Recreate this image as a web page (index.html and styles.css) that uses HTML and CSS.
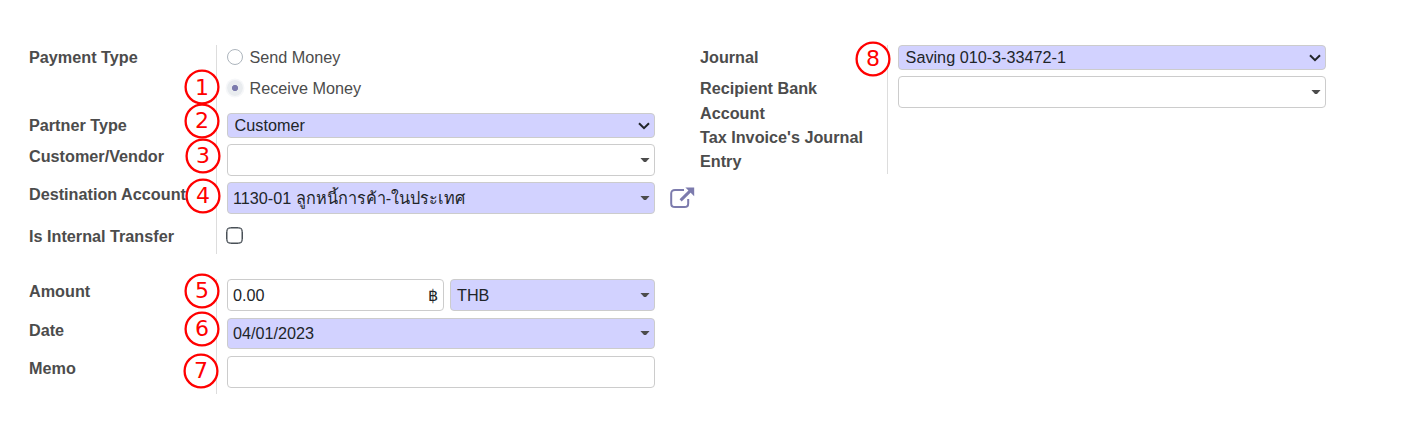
FILE: index.html
```html
<!DOCTYPE html>
<html lang="en">
<head>
<meta charset="utf-8">
<title>Payment</title>
<link rel="stylesheet" href="styles.css">
</head>
<body>
<main class="sheet">
  <div class="column">
    <section class="group">
      <div class="row row-radios">
        <div class="label">Payment Type</div>
        <div class="value radios">
          <div class="radio"><span class="dot"></span>Send Money</div>
          <div class="radio"><span class="dot checked"></span>Receive Money</div>
        </div>
        <svg class="badge b1" viewBox="0 0 36 36"><circle cx="18" cy="18" r="16.4"/><text x="18" y="25.7">1</text></svg>
      </div>
      <div class="row row-select">
        <div class="label">Partner Type</div>
        <div class="value"><div class="field select required">Customer<svg class="chevron" viewBox="0 0 12 8"><path d="M1 1.2 6 6.2 11 1.2"/></svg></div></div>
        <svg class="badge b2" viewBox="0 0 36 36"><circle cx="18" cy="18" r="16.4"/><text x="18" y="25">2</text></svg>
      </div>
      <div class="row row-input">
        <div class="label">Customer/Vendor</div>
        <div class="value"><div class="field"><span class="caret"></span></div></div>
        <svg class="badge b3" viewBox="0 0 36 36"><circle cx="18" cy="18" r="16.4"/><text x="18" y="25">3</text></svg>
      </div>
      <div class="row row-input">
        <div class="label">Destination Account</div>
        <div class="value"><div class="field required">1130-01 ลูกหนี้การค้า-ในประเทศ<span class="caret"></span></div>
          <svg class="external" viewBox="0 0 25 22"><path class="frame" d="M14 3.1H5Q1.2 3.1 1.2 6.5V16.4Q1.2 20 5 20H14.5Q18.2 20 18.2 16.4V12"/><path class="shaft" d="M10.6 13.3 20 4.2"/><path class="head" d="M15.4.6H24.2V9.3Z"/></svg>
        </div>
        <svg class="badge b4" viewBox="0 0 36 36"><circle cx="18" cy="18" r="16.4"/><text x="18" y="25">4</text></svg>
      </div>
      <div class="row row-check">
        <div class="label">Is Internal Transfer</div>
        <div class="value"><span class="checkbox"></span></div>
      </div>
    </section>
    <section class="group">
      <div class="row row-amount">
        <div class="label">Amount</div>
        <div class="value amount">
          <div class="field number">0.00<span>฿</span></div>
          <div class="field currency required">THB<span class="caret"></span></div>
        </div>
        <svg class="badge b5" viewBox="0 0 36 36"><circle cx="18" cy="18" r="16.4"/><text x="18" y="25.4">5</text></svg>
      </div>
      <div class="row row-input">
        <div class="label">Date</div>
        <div class="value"><div class="field date required">04/01/2023<span class="caret"></span></div></div>
        <svg class="badge b6" viewBox="0 0 36 36"><circle cx="18" cy="18" r="16.4"/><text x="18" y="25.2">6</text></svg>
      </div>
      <div class="row row-input">
        <div class="label">Memo</div>
        <div class="value"><div class="field"></div></div>
        <svg class="badge b7" viewBox="0 0 36 36"><circle cx="18" cy="18" r="16.4"/><text x="18" y="25.4">7</text></svg>
      </div>
    </section>
  </div>
  <div class="column">
    <section class="group">
      <div class="row row-select">
        <div class="label">Journal</div>
        <div class="value"><div class="field select required">Saving 010-3-33472-1<svg class="chevron" viewBox="0 0 12 8"><path d="M1 1.2 6 6.2 11 1.2"/></svg></div></div>
        <svg class="badge b8" viewBox="0 0 36 36"><circle cx="18" cy="18" r="16.4"/><text x="18" y="25.4">8</text></svg>
      </div>
      <div class="row row-double">
        <div class="label spaced">Recipient Bank<br>Account</div>
        <div class="value"><div class="field"><span class="caret"></span></div></div>
      </div>
      <div class="row row-double">
        <div class="label">Tax Invoice's Journal<br>Entry</div>
        <div class="value"></div>
      </div>
    </section>
  </div>
</main>
</body>
</html>
```
FILE: styles.css
```css
* { box-sizing: border-box; }
body {
  margin: 0;
  background: #fff;
  color: #4c4c4c;
  font: 16.22px/24px "Liberation Sans", "Noto Sans", sans-serif;
}
.sheet { display: flex; gap: 45px; padding: 45px 0 0 29px; }
.column { display: flex; flex-direction: column; gap: 25px; width: 626px; }
.row { position: relative; display: grid; grid-template-columns: 187px 439px; }
.label { font-weight: bold; white-space: nowrap; }
.spaced { line-height: 25px; }
.value { position: relative; border-left: 1px solid #ddd; padding-left: 10px; }
.row-radios { height: 68px; }
.row-select { height: 31px; }
.row-input { height: 38px; }
.row-check { height: 34px; }
.row-amount { height: 39px; }
.row-double { height: 49px; }
.row-check .label { padding-top: 4px; }
.field {
  display: flex;
  align-items: center;
  justify-content: space-between;
  width: 428px;
  height: 32px;
  padding: 0 4px 0 5px;
  border: 1px solid #ccc;
  border-radius: 4px;
  background: #fff;
  color: #212529;
  white-space: nowrap;
}
.required { background: #d2d2ff; }
.select { height: 25px; padding: 0 4px 0 6.6px; line-height: 22px; align-items: flex-start; }
.select .chevron { margin-top: 8px; }
.date { height: 31px; line-height: 28px; padding-bottom: 1px; }
.caret {
  width: 10px;
  height: 5px;
  margin-left: auto;
  background: #4c4c4c;
  clip-path: polygon(0 0, 100% 0, 60% 90%, 40% 90%);
}
.chevron { width: 12px; height: 8px; fill: none; stroke: #212529; stroke-width: 2; }
.radios { display: flex; flex-direction: column; gap: 7px; }
.radio { display: flex; align-items: center; gap: 7px; height: 24px; margin-left: -.5px; }
.dot { width: 16px; height: 16px; border: 1px solid #adb5bd; border-radius: 50%; }
.dot.checked {
  border: 0;
  background: radial-gradient(circle, #7c7bad 0 2.8px, #e9ecef 3.3px);
  box-shadow: 0 0 0 1.5px #f6f7f9;
}
.checkbox {
  display: block;
  width: 17px;
  height: 17px;
  margin: 7px 0 0 -1px;
  border: 1.5px solid #495057;
  border-radius: 4.5px;
  box-shadow: inset 0 0 0 .5px #495057;
}
.amount { display: flex; gap: 6px; }
.number { width: 217px; padding-right: 5px; }
.currency { width: 205px; padding-left: 6px; }
.external { position: absolute; left: 453px; top: 5px; width: 25px; height: 22px; }
.external .frame { fill: none; stroke: #7c7bad; stroke-width: 2; }
.external .shaft { stroke: #7c7bad; stroke-width: 3; }
.external .head { fill: #7c7bad; }
.badge { position: absolute; width: 36px; height: 36px; }
.badge circle { fill: #fff; stroke: #f00; stroke-width: 2.3; }
.badge text { fill: #f00; font: 22px "DejaVu Sans", sans-serif; text-anchor: middle; }
.b1 { left: 154.5px; top: 23.5px; }
.b2 { left: 155.2px; top: -10px; }
.b3 { left: 155.5px; top: -6.2px; }
.b4 { left: 156px; top: -4.2px; }
.b5 { left: 154.6px; top: -5.7px; }
.b6 { left: 154.6px; top: -7px; }
.b7 { left: 153.8px; top: -2.7px; }
.b8 { left: 155px; top: -4px; }
```
